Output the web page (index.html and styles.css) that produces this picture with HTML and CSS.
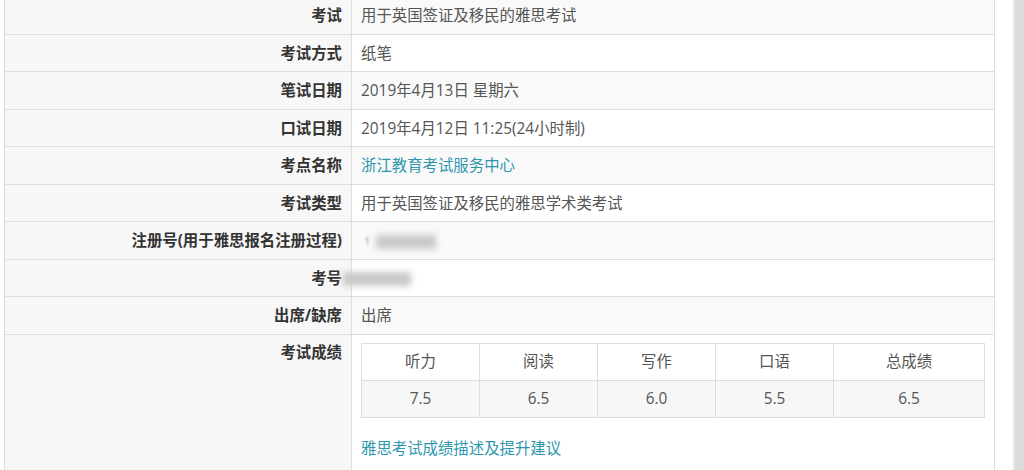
FILE: index.html
```html
<!DOCTYPE html>
<html lang="zh-CN">
<head>
    <meta charset="UTF-8">
    <meta name="viewport" content="width=device-width, initial-scale=1.0">
    <title>雅思成绩</title>
    <link rel="stylesheet" href="styles.css">
</head>
<body>

<div class="page">
    <div class="result-panel">
        <table class="result-table">
            <colgroup>
                <col class="label-col">
                <col>
            </colgroup>
            <tbody>
                <tr>
                    <th>考试</th>
                    <td>用于英国签证及移民的雅思考试</td>
                </tr>
                <tr>
                    <th>考试方式</th>
                    <td>纸笔</td>
                </tr>
                <tr>
                    <th>笔试日期</th>
                    <td>2019年4月13日 星期六</td>
                </tr>
                <tr>
                    <th>口试日期</th>
                    <td>2019年4月12日 11:25(24小时制)</td>
                </tr>
                <tr>
                    <th>考点名称</th>
                    <td><a href="#" class="link">浙江教育考试服务中心</a></td>
                </tr>
                <tr>
                    <th>考试类型</th>
                    <td>用于英国签证及移民的雅思学术类考试</td>
                </tr>
                <tr>
                    <th>注册号(用于雅思报名注册过程)</th>
                    <td class="masked-cell"><span class="masked-digit">1</span><span class="mask mask-reg"></span></td>
                </tr>
                <tr>
                    <th>考号</th>
                    <td class="masked-cell"><span class="mask mask-id"></span></td>
                </tr>
                <tr>
                    <th>出席/缺席</th>
                    <td>出席</td>
                </tr>
                <tr class="score-row">
                    <th>考试成绩</th>
                    <td>
                        <table class="score-table">
                            <colgroup>
                                <col class="band-col">
                                <col class="band-col">
                                <col class="band-col">
                                <col class="band-col">
                                <col>
                            </colgroup>
                            <thead>
                                <tr>
                                    <th>听力</th>
                                    <th>阅读</th>
                                    <th>写作</th>
                                    <th>口语</th>
                                    <th>总成绩</th>
                                </tr>
                            </thead>
                            <tbody>
                                <tr>
                                    <td>7.5</td>
                                    <td>6.5</td>
                                    <td>6.0</td>
                                    <td>5.5</td>
                                    <td>6.5</td>
                                </tr>
                            </tbody>
                        </table>
                        <a href="#" class="link">雅思考试成绩描述及提升建议</a>
                    </td>
                </tr>
            </tbody>
        </table>
    </div>
    <div class="scroll-bar"></div>
</div>

</body>
</html>
```

FILE: styles.css
```css
* {
    margin: 0;
    padding: 0;
    box-sizing: border-box;
}
body {
    font-family: 'Open Sans', 'Noto Sans CJK SC', sans-serif;
    font-size: 15.4px;
    color: #555;
    background-color: #fff;
    overflow: hidden;
}
.page {
    display: flex;
    height: 470px;
}
.result-panel {
    flex: 1;
    padding: 0 18px 0 4px;
    margin-top: -4px;
}
.scroll-bar {
    width: 11px;
    background-color: #dcdcdc;
    border-left: 2px solid #e8e8e8;
}
.result-table {
    width: 100%;
    border-collapse: collapse;
    border: 1px solid #ddd;
}
.label-col {
    width: 347px;
}
.result-table > tbody > tr > th,
.result-table > tbody > tr > td {
    border: 1px solid #ddd;
    padding: 9px 9px 7px;
    line-height: 20.5px;
    vertical-align: top;
}
.result-table > tbody > tr > th {
    background-color: #f7f7f7;
    color: #333;
    font-weight: 700;
    text-align: right;
}
.result-table > tbody > tr > td {
    text-align: left;
}
.result-table > tbody > tr:nth-child(odd) > td {
    background-color: #f9f9f9;
}
.result-table > tbody > tr:nth-child(even) > td {
    background-color: #fff;
}
.score-row > th,
.score-row > td {
    padding-top: 8px !important;
    height: 140px;
}
.link {
    color: #2e97ad;
    text-decoration: none;
}

/* blurred-out personal numbers */
.masked-cell {
    white-space: nowrap;
}
.masked-digit {
    display: inline-block;
    color: #999;
    font-size: 11px;
    filter: blur(1px);
    margin-left: 3px;
    vertical-align: top;
}
.mask {
    display: inline-block;
    height: 14px;
    background-color: #c9c9c9;
    filter: blur(3px);
    vertical-align: middle;
}
.mask-reg {
    width: 60px;
    margin-left: 6px;
}
.mask-id {
    width: 68px;
    margin-left: -18px;
}

.score-table {
    width: 100%;
    border-collapse: collapse;
    border: 1px solid #ddd;
    margin-bottom: 21px;
}
.band-col {
    width: 118px;
}
.score-table th,
.score-table td {
    border: 1px solid #ddd;
    padding: 8px;
    line-height: 20px;
    text-align: center;
    font-weight: 400;
    color: #555;
}
.score-table thead th {
    background-color: #fff;
}
.score-table tbody td {
    background-color: #f7f7f7;
}
```
